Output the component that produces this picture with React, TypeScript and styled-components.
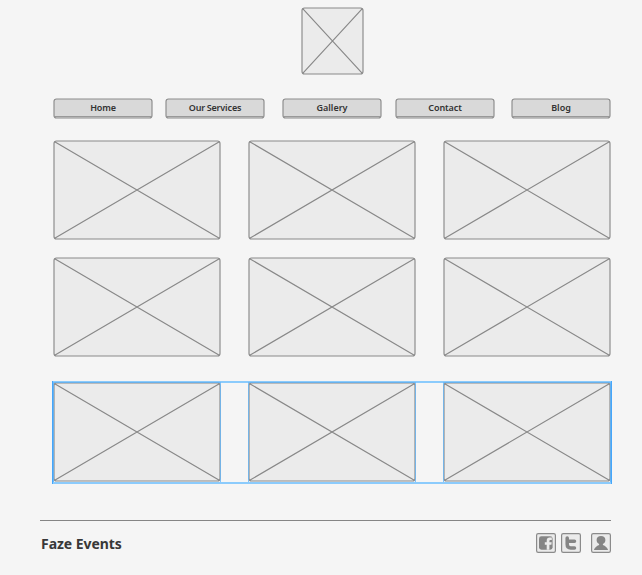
import React from "react";
import styled, { createGlobalStyle } from "styled-components";

const GlobalStyle = createGlobalStyle`
  body {
    margin: 0;
    background: #f5f5f5;
    font-family: "Noto Sans", "Open Sans", sans-serif;
    color: #383838;
  }
`;

const Page = styled.div`
  box-sizing: border-box;
  width: 642px;
  height: 575px;
  padding: 7px 31px 0 40px;
  overflow: hidden;
  background: #f5f5f5;
`;

const Header = styled.header`
  display: flex;
  padding-left: 261px;
`;

const Nav = styled.nav`
  display: grid;
  grid-template-columns: 112px 117px 113px 116px 100px;
  margin: 23px 0 0 13px;
`;

const NavButton = styled.button`
  position: relative;
  box-sizing: border-box;
  width: 100px;
  height: 21px;
  padding: 0 0 1px;
  border: 0;
  background: transparent;
  color: #333;
  font: 600 9px/20px "Noto Sans", sans-serif;
  text-align: center;
`;

const NavFrame = styled.svg`
  position: absolute;
  inset: 0;
`;

const NavLabel = styled.span<{ $spacing: number }>`
  position: relative;
  letter-spacing: ${(p) => p.$spacing}px;
  word-spacing: -0.5px;
`;

const Gallery = styled.main`
  display: flex;
  flex-direction: column;
  margin: 21px 0 0 12px;
`;

const CardRow = styled.div<{ $gap?: number; $selected?: boolean }>`
  box-sizing: border-box;
  display: flex;
  gap: 27px;
  width: 560px;
  height: ${(p) => (p.$selected ? 103 : 100)}px;
  margin-bottom: ${(p) => p.$gap ?? 0}px;
  padding: ${(p) => (p.$selected ? "1px 1px 2px" : "0 1px")};
  box-shadow: ${(p) =>
    p.$selected ? "inset 1px 0 #45a6fb, inset -1px 0 #45a6fb, inset 0 0 0 2px #8bcbfc" : "none"};
`;

const Picture = styled.svg`
  display: block;
  flex: none;
`;

const Footer = styled.footer`
  display: flex;
  align-items: flex-start;
  justify-content: space-between;
  height: 54px;
  margin-top: 36px;
  border-top: 1px solid #858585;
`;

const Brand = styled.div`
  margin-top: 13px;
  padding-left: 1px;
  font-size: 14px;
  line-height: 20px;
  font-weight: 700;
  letter-spacing: -0.05px;
  white-space: nowrap;
`;

const Social = styled.div`
  display: grid;
  grid-template-columns: 25px 30px 20px;
  margin-top: 12px;
`;

const SocialIcon = styled.svg`
  display: block;
`;

function Placeholder({ width, height, selected }: { width: number; height: number; selected?: boolean }) {
  return (
    <Picture width={width} height={height}>
      <rect x="1" y="1" width={width - 2} height={height - 2} rx="2.5" fill="#ebebeb" stroke="#8a8a8a" strokeWidth="1.15" />
      <path
        d={`M1.7 1.7L${width - 1.7} ${height - 1.7}M${width - 1.7} 1.7L1.7 ${height - 1.7}`}
        fill="none"
        stroke="#888"
        strokeWidth="1.15"
      />
      {selected && (
        <path d={`M.5 ${height}V.5H${width - 0.5}V${height}`} fill="none" stroke="#5db2f5" strokeOpacity=".75" />
      )}
    </Picture>
  );
}

function IconTile({ children }: { children: React.ReactNode }) {
  return (
    <SocialIcon width="20" height="20" viewBox="0 0 20 20">
      <rect x=".6" y=".6" width="18.8" height="18.8" rx="1.6" fill="#ebebeb" stroke="#8b8b8b" strokeWidth="1.2" />
      {children}
    </SocialIcon>
  );
}

const links = [
  { label: "Home", spacing: -0.15 },
  { label: "Our Services", spacing: -0.15 },
  { label: "Gallery", spacing: 0 },
  { label: "Contact", spacing: -0.1 },
  { label: "Blog", spacing: 0 },
];

const rows = [
  { gap: 17, selected: false },
  { gap: 24, selected: false },
  { gap: 0, selected: true },
];

export default function App() {
  return (
    <Page>
      <GlobalStyle />
      <Header>
        <Placeholder width={63} height={68} />
      </Header>
      <Nav>
        {links.map((l) => (
          <NavButton key={l.label}>
            <NavFrame width="100" height="21">
              <rect x="1" y="1" width="98" height="19" rx="2.5" fill="#d9d9d9" stroke="#8c8c8c" strokeWidth="1.15" />
              <path d="M2 18.5H98" stroke="#999" />
            </NavFrame>
            <NavLabel $spacing={l.spacing}>{l.label}</NavLabel>
          </NavButton>
        ))}
      </Nav>
      <Gallery>
        {rows.map((r, i) => (
          <CardRow key={i} $gap={r.gap} $selected={r.selected}>
            {[0, 1, 2].map((n) => (
              <Placeholder key={n} width={168} height={100} selected={r.selected} />
            ))}
          </CardRow>
        ))}
      </Gallery>
      <Footer>
        <Brand>Faze Events</Brand>
        <Social>
          <IconTile>
            <rect x="3" y="3.3" width="13.6" height="13.4" rx="2.4" fill="#858585" />
            <path d="M10.7 16.7v-5H8.8V9.2h1.9V7.9c0-2.2 1.1-3.3 3-3.3h2.1v2.3h-1.2c-.9 0-1.2.4-1.2 1.1v1.2h2.3l-.3 2.5h-2v5z" fill="#ebebeb" />
          </IconTile>
          <IconTile>
            <path d="M6.2 5v6.3c0 2.3 1.3 3.7 3.5 3.7h3.8M6.2 8.3h7.3" fill="none" stroke="#858585" strokeWidth="3.5" strokeLinecap="round" />
          </IconTile>
          <IconTile>
            <path d="M10 3C7.4 3 5.6 4.6 5.6 7c0 1.9.9 3.2 2.5 3.9v1.2C5.6 13 3.8 14.6 2.9 17h14.2c-.9-2.4-2.7-4-5.2-4.9v-1.2c1.6-.7 2.5-2 2.5-3.9 0-2.4-1.8-4-4.4-4z" fill="#858585" />
          </IconTile>
        </Social>
      </Footer>
    </Page>
  );
}
